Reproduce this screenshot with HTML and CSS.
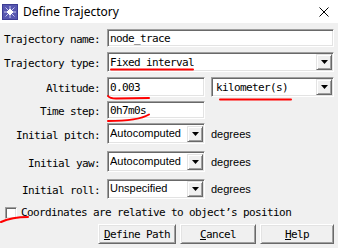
FILE: index.html
```html
<!DOCTYPE html>
<html>
<head>
<meta charset="utf-8">
<link rel="stylesheet" href="styles.css">
</head>
<body>
<div class="window">
  <div class="titlebar">
    <svg class="appicon" viewBox="0 0 16 16" width="16" height="16">
      <rect x="0" y="0" width="16" height="16" fill="#3c3c94"/>
      <rect x="1" y="1" width="14" height="14" fill="#5656b0"/>
      <g stroke="#c8c8f0" stroke-width="1">
        <line x1="8" y1="2" x2="8" y2="14"/>
        <line x1="2" y1="8" x2="14" y2="8"/>
        <line x1="3.5" y1="3.5" x2="12.5" y2="12.5"/>
        <line x1="12.5" y1="3.5" x2="3.5" y2="12.5"/>
      </g>
      <rect x="6" y="6" width="4" height="4" fill="#ffffff"/>
      <rect x="7" y="5" width="2" height="6" fill="#ffffff"/>
      <rect x="5" y="7" width="6" height="2" fill="#ffffff"/>
    </svg>
    <span class="title">Define Trajectory</span>
    <svg class="close" viewBox="0 0 10 10" width="10" height="10">
      <path d="M0.5 0.5 L9.5 9.5 M9.5 0.5 L0.5 9.5" stroke="#000" stroke-width="1" fill="none"/>
    </svg>
  </div>

  <div class="content">
    <div class="row row-name">
      <span class="lbl">Trajectory name:</span>
      <div class="field grow h18"><span class="val">node_trace</span></div>
    </div>
    <div class="row row-type">
      <span class="lbl">Trajectory type:</span>
      <div class="field grow"><span class="val">Fixed interval</span><span class="drop"><svg width="7" height="4" viewBox="0 0 7 4"><polygon points="0,0 7,0 3.5,4" fill="#000"/></svg></span></div>
    </div>
    <div class="row row-alt">
      <span class="lbl">Altitude:</span>
      <div class="field short"><span class="val">0.003</span></div>
      <div class="field grow unit"><span class="val">kilometer(s)</span><span class="drop"><svg width="7" height="4" viewBox="0 0 7 4"><polygon points="0,0 7,0 3.5,4" fill="#000"/></svg></span></div>
    </div>
    <div class="row row-time">
      <span class="lbl">Time step:</span>
      <div class="field short h18"><span class="val">0h7m0s</span></div>
    </div>
    <div class="row row-pitch">
      <span class="lbl">Initial pitch:</span>
      <div class="field short h21"><span class="val prop">Autocomputed</span><span class="drop"><svg width="7" height="4" viewBox="0 0 7 4"><polygon points="0,0 7,0 3.5,4" fill="#000"/></svg></span></div>
      <span class="unit-text">degrees</span>
    </div>
    <div class="row row-yaw">
      <span class="lbl">Initial yaw:</span>
      <div class="field short h21"><span class="val prop">Autocomputed</span><span class="drop"><svg width="7" height="4" viewBox="0 0 7 4"><polygon points="0,0 7,0 3.5,4" fill="#000"/></svg></span></div>
      <span class="unit-text">degrees</span>
    </div>
    <div class="row row-roll">
      <span class="lbl">Initial roll:</span>
      <div class="field short"><span class="val prop">Unspecified</span><span class="drop"><svg width="7" height="4" viewBox="0 0 7 4"><polygon points="0,0 7,0 3.5,4" fill="#000"/></svg></span></div>
      <span class="unit-text">degrees</span>
    </div>
    <div class="check-row">
      <span class="checkbox"></span>
      <span class="check-label"><u>C</u>oordinates are relative to object’s position</span>
    </div>
    <div class="buttons">
      <button class="btn btn-define"><u>D</u>efine Path</button>
      <button class="btn btn-cancel"><u>C</u>ancel</button>
      <button class="btn btn-help"><u>H</u>elp</button>
    </div>
  </div>

  <svg class="marks" width="338" height="248" viewBox="0 0 338 248">
    <g stroke="#ff0000" stroke-width="2" fill="none" stroke-linecap="round">
      <path d="M111 69.5 L193 69.5"/>
      <path d="M108 96 Q110 98.5 116 98.5 L149 98"/>
      <path d="M108 121 Q138 121 149 114.5"/>
      <path d="M220 99.5 L291 99.5"/>
      <path d="M1 222 Q12 217 28 217"/>
    </g>
  </svg>
</div>
</body>
</html>
```

FILE: styles.css
```css
* { box-sizing: border-box; }
html, body { margin: 0; padding: 0; }
body {
  width: 338px;
  height: 248px;
  overflow: hidden;
  background: #f0f0f0;
}
.window {
  position: relative;
  width: 338px;
  height: 248px;
  background: #f0f0f0;
  color: #000;
  font-family: "DejaVu Sans Mono", "Liberation Mono", monospace;
  font-size: 11px;
  letter-spacing: -0.62px;
}
.titlebar {
  height: 23px;
  background: #fff;
  display: flex;
  align-items: center;
  padding-left: 2px;
}
.appicon { flex: none; margin-right: 5px; display: block; }
.title {
  flex: 1;
  font-family: "Noto Sans", "Liberation Sans", sans-serif;
  font-size: 12px;
  letter-spacing: 0;
  color: #000;
}
.close { flex: none; margin-right: 9px; display: block; }

.content {
  display: flex;
  flex-direction: column;
  padding: 0 4px;
}
.row { display: flex; align-items: center; }
.row-name { margin-top: 6px; }
.row-type { margin-top: 5px; }
.row-alt { margin-top: 5px; }
.row-time { margin-top: 4px; }
.row-pitch { margin-top: 4px; }
.row-yaw { margin-top: 7px; }
.row-roll { margin-top: 7px; }

.lbl {
  flex: none;
  width: 96px;
  margin-right: 7px;
  text-align: right;
  white-space: nowrap;
  padding-top: 3px;
}
.field {
  height: 20px;
  background: #fff;
  border: 1px solid;
  border-color: #a0a0a0 #ffffff #ffffff #a0a0a0;
  box-shadow: inset 1px 1px #696969, inset -1px -1px #e3e3e3;
  display: flex;
  align-items: center;
  padding-left: 2px;
  white-space: nowrap;
  overflow: hidden;
}
.field.h18 { height: 18px; }
.field.h21 { height: 21px; }
.grow { flex: 1; }
.short { flex: none; width: 98px; }
.unit { margin-left: 6px; padding-left: 4px; }
.val { flex: 1; overflow: hidden; }
.val.prop {
  font-family: "Liberation Sans", Arial, sans-serif;
  font-size: 11px;
  letter-spacing: 0;
  padding-bottom: 2px;
}
.drop {
  flex: none;
  width: 16px;
  height: 16px;
  margin-right: 1px;
  background: #f0f0f0;
  border: 1px solid;
  border-color: #e3e3e3 #696969 #696969 #e3e3e3;
  box-shadow: inset 1px 1px #ffffff, inset -1px -1px #a0a0a0;
  display: flex;
  align-items: center;
  justify-content: center;
}
.drop svg { display: block; }
.unit-text {
  margin-left: 6px;
  font-family: "Liberation Sans", Arial, sans-serif;
  font-size: 11px;
  letter-spacing: 0;
}

.check-row {
  display: flex;
  align-items: center;
  margin-top: 7px;
  padding-left: 1px;
}
.checkbox {
  flex: none;
  width: 12px;
  height: 12px;
  background: #fff;
  border: 1px solid;
  border-color: #a0a0a0 #ffffff #ffffff #a0a0a0;
  box-shadow: inset 1px 1px #696969, inset -1px -1px #e3e3e3;
  margin-right: 4px;
}
.check-label { white-space: nowrap; }

.buttons {
  display: flex;
  justify-content: flex-end;
  gap: 4px;
  margin-top: 5px;
}
.btn {
  height: 20px;
  font: inherit;
  letter-spacing: -0.62px;
  color: #000;
  background: #f0f0f0;
  border: 1px solid;
  border-color: #ffffff #696969 #696969 #ffffff;
  box-shadow: inset 1px 1px #e3e3e3, inset -1px -1px #a0a0a0;
  padding: 0;
  margin: 0;
}
.btn-define { width: 78px; }
.btn-cancel { width: 76px; }
.btn-help { width: 74px; }

.marks {
  position: absolute;
  left: 0;
  top: 0;
  pointer-events: none;
}
```
